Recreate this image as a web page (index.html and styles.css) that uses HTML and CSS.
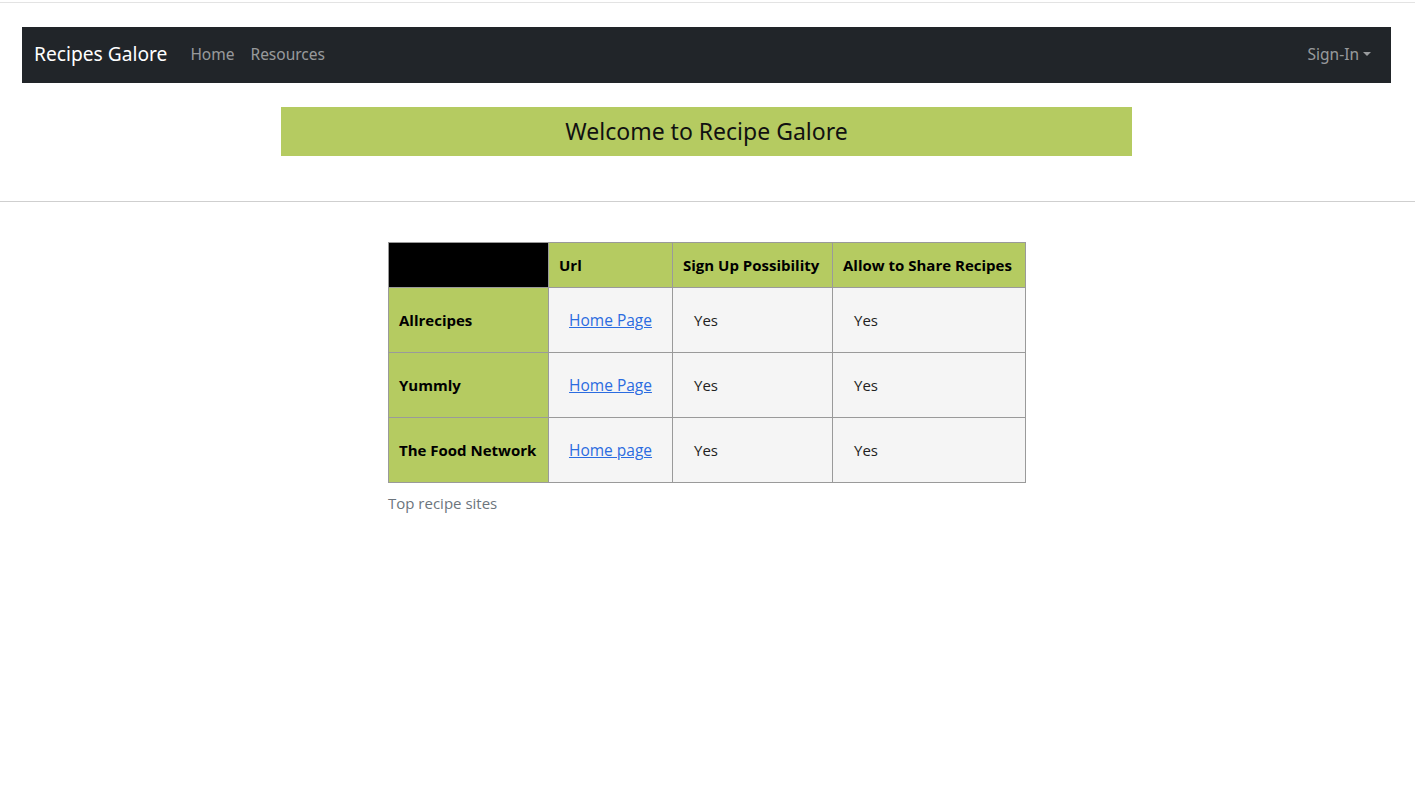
FILE: index.html
```html
<!DOCTYPE html>
<html>
<head>
<meta charset="utf-8">
<title>Recipes Galore</title>
<link rel="stylesheet" href="styles.css">
</head>
<body>
<div class="topline"></div>
<nav class="navbar">
  <div class="nav-left">
    <a class="brand" href="#">Recipes Galore</a>
    <a class="nav-link" href="#">Home</a>
    <a class="nav-link" href="#">Resources</a>
  </div>
  <a class="nav-link dropdown" href="#">Sign-In<span class="caret"></span></a>
</nav>
<div class="welcome">Welcome to Recipe Galore</div>
<hr class="divider">
<div class="table-wrap">
  <table class="sites">
    <colgroup>
      <col class="c1"><col class="c2"><col class="c3"><col class="c4">
    </colgroup>
    <thead>
      <tr>
        <th class="blank"></th>
        <th>Url</th>
        <th>Sign Up Possibility</th>
        <th>Allow to Share Recipes</th>
      </tr>
    </thead>
    <tbody>
      <tr>
        <th class="rowhead">Allrecipes</th>
        <td class="link"><a href="#">Home Page</a></td>
        <td>Yes</td>
        <td>Yes</td>
      </tr>
      <tr>
        <th class="rowhead">Yummly</th>
        <td class="link"><a href="#">Home Page</a></td>
        <td>Yes</td>
        <td>Yes</td>
      </tr>
      <tr>
        <th class="rowhead">The Food Network</th>
        <td class="link"><a href="#">Home page</a></td>
        <td>Yes</td>
        <td>Yes</td>
      </tr>
    </tbody>
  </table>
  <div class="caption">Top recipe sites</div>
</div>
</body>
</html>
```
FILE: styles.css
```css
* { box-sizing: border-box; }
html, body { margin: 0; padding: 0; background: #fff; }
body {
  font-family: "Noto Sans", "Open Sans", sans-serif;
  color: #212529;
  padding-right: 2px;
}
.topline {
  margin-top: 2px;
  margin-right: -2px;
  border-top: 1px solid #e3e3e3;
  height: 25px;
}
.navbar {
  margin: 0 22px;
  height: 56px;
  background: #212529;
  display: flex;
  align-items: center;
  justify-content: space-between;
  padding: 0 12px 2px;
}
.nav-left { display: flex; align-items: center; }
.brand {
  color: #fff;
  text-decoration: none;
  font-size: 19.2px;
  margin-right: 23px;
  padding-bottom: 1px;
}
.nav-link {
  color: rgba(255,255,255,0.55);
  text-decoration: none;
  font-size: 15.5px;
  padding: 0 8px;
}
.nav-left .brand + .nav-link { padding-left: 0; }
.dropdown { display: flex; align-items: center; padding-right: 8px; }
.caret {
  display: inline-block;
  margin-left: 4px;
  width: 0; height: 0;
  border-top: 4.5px solid rgba(255,255,255,0.55);
  border-left: 4px solid transparent;
  border-right: 4px solid transparent;
}
.welcome {
  width: 851px;
  margin: 24px auto 0;
  height: 49px;
  background: #b5cb61;
  color: #111;
  font-size: 23px;
  display: flex;
  align-items: center;
  justify-content: center;
  padding-bottom: 2px;
}
.divider {
  margin: 45px -2px 0 0;
  border: 0;
  border-top: 1px solid #cfcfcf;
  height: 0;
}
.table-wrap {
  width: 637px;
  margin: 40px auto 0;
}
.sites {
  width: 637px;
  border-collapse: collapse;
  table-layout: fixed;
  font-family: "Open Sans", "Noto Sans", sans-serif;
  font-size: 15px;
}
.c1 { width: 160px; }
.c2 { width: 124px; }
.c3 { width: 160px; }
.c4 { width: 193px; }
.sites th, .sites td { border: 1px solid #9a9a9a; }
.sites thead th {
  background: #b5cb61;
  color: #000;
  font-weight: 700;
  text-align: left;
  height: 45px;
  padding: 0 10px;
  white-space: nowrap;
}
.sites thead th.blank { background: #000; }
.sites .rowhead {
  background: #b5cb61;
  color: #000;
  font-weight: 700;
  text-align: left;
  padding: 0 10px;
  white-space: nowrap;
}
.sites td {
  background: #f5f5f5;
  height: 65px;
  padding: 0 21px;
  color: #222;
}
.sites td.link { text-align: center; padding: 0; }
.sites td.link a { color: #2b6ce0; text-decoration: underline; font-size: 15.5px; }
.caption {
  margin-top: 10px;
  color: #6c757d;
  font-family: "Open Sans", "Noto Sans", sans-serif;
  font-size: 15px;
}
```
